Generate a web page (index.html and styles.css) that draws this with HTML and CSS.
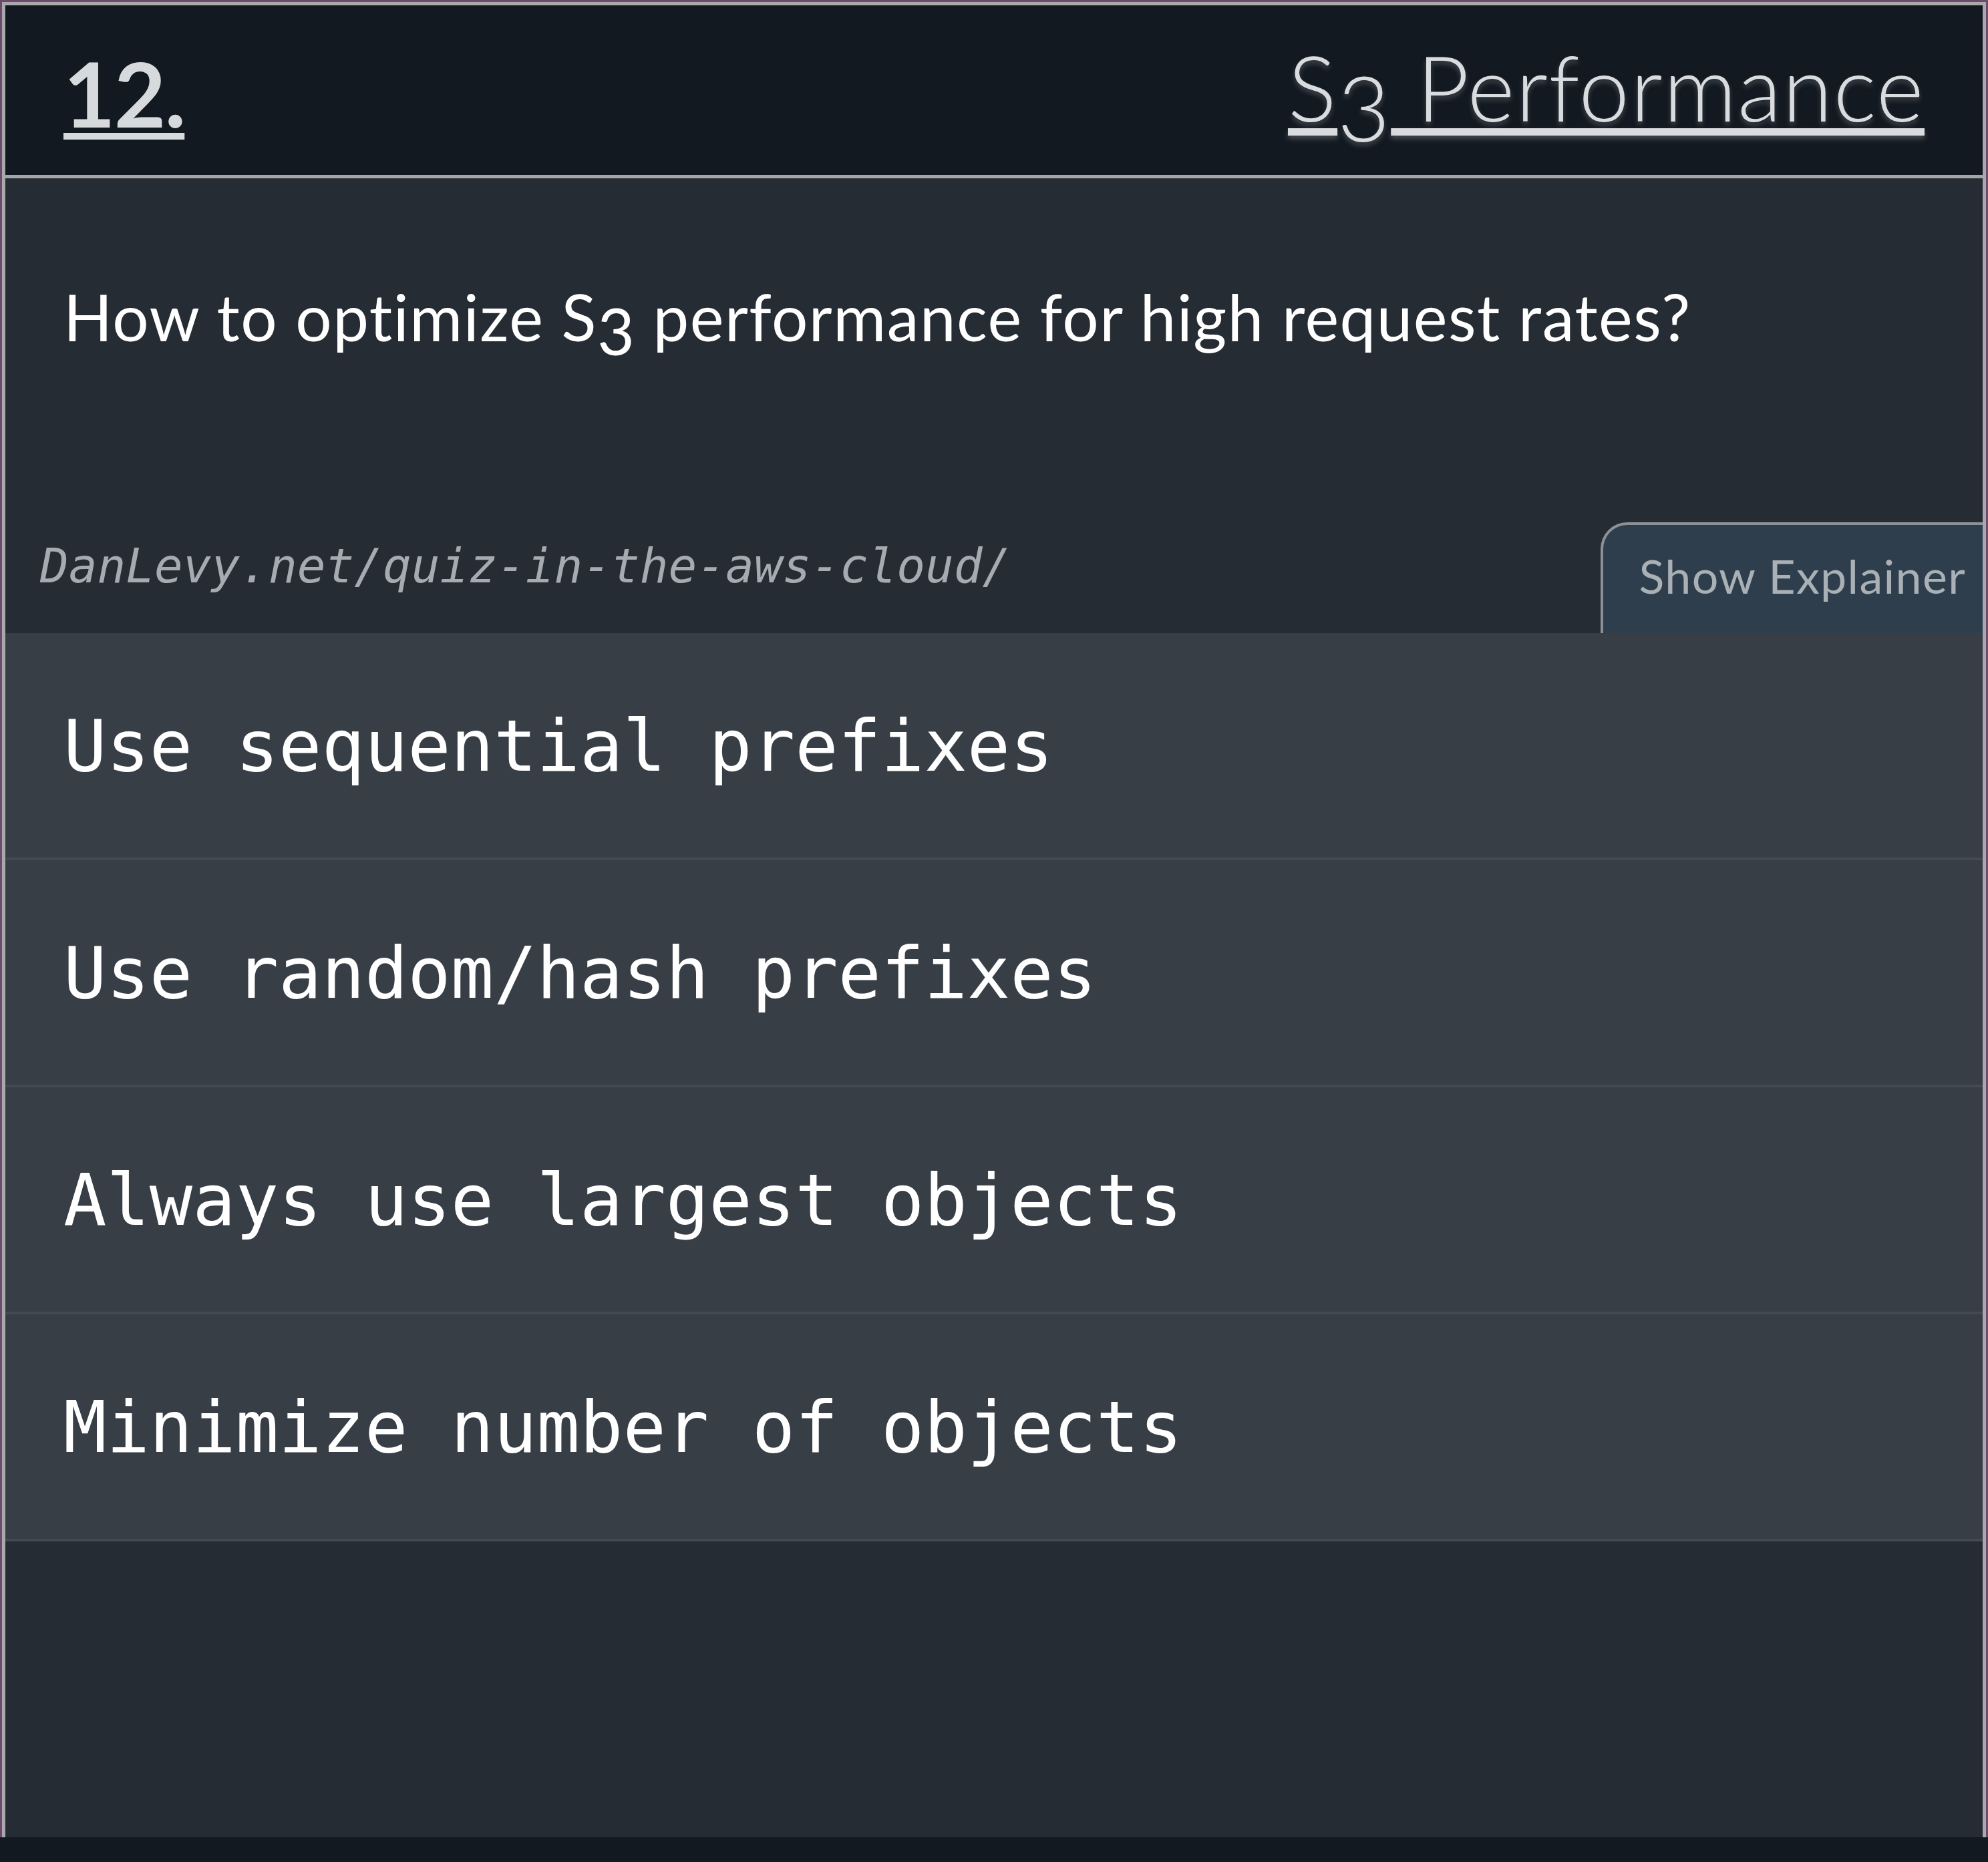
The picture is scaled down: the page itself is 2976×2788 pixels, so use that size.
FILE: index.html
```html
<!DOCTYPE html>
<html lang="en">
<head>
<meta charset="utf-8">
<title>S3 Performance</title>
<link rel="stylesheet" href="styles.css">
</head>
<body>
<div class="frame">
  <div class="card">
    <header class="card-header">
      <a class="qnum" href="#">12.</a>
      <a class="qtitle" href="#">S<span class="onum">3</span> Performance</a>
    </header>
    <section class="question">
      <p class="question-text">How to optimize S<span class="onum">3</span> performance for high request rates?</p>
    </section>
    <div class="meta-row">
      <span class="source">DanLevy.net/quiz-in-the-aws-cloud/</span>
      <button class="explainer-btn" type="button">Show Explainer</button>
    </div>
    <ul class="answers">
      <li class="answer">Use sequential prefixes</li>
      <li class="answer">Use random/hash prefixes</li>
      <li class="answer">Always use largest objects</li>
      <li class="answer">Minimize number of objects</li>
    </ul>
  </div>
</div>
</body>
</html>
```

FILE: styles.css
```css
html, body {
  margin: 0;
  padding: 0;
}

body {
  background: #121920;
  width: 2976px;
  height: 2788px;
  overflow: hidden;
}

.frame {
  border: 3px solid #6f4a6b;
  border-bottom: none;
}

.card {
  border: 5px solid #a7a9ad;
  border-bottom: none;
  background: #262c33;
  padding-bottom: 443px;
}

.card-header {
  box-sizing: border-box;
  height: 259px;
  background: #121920;
  border-bottom: 5px solid #a3a6a9;
  display: flex;
  justify-content: space-between;
  align-items: flex-start;
  padding: 40px 87px 0 87px;
}

.qnum {
  margin-top: 12px;
  font-family: "Lato", "Liberation Sans", sans-serif;
  font-weight: 700;
  font-size: 134px;
  line-height: 1.2;
  color: #d6dadd;
  letter-spacing: -2px;
  text-decoration: underline;
  text-decoration-thickness: 10px;
  text-underline-offset: 8px;
}

.qtitle {
  font-family: "Lato", "Liberation Sans", sans-serif;
  font-weight: 300;
  font-size: 136px;
  line-height: 1.2;
  letter-spacing: 1.4px;
  color: #d9dcdf;
  text-decoration: underline;
  text-decoration-thickness: 11px;
  text-underline-offset: 10px;
  text-shadow: 0 5px 7px rgba(110, 112, 116, 0.55);
}

.onum {
  position: relative;
  top: 0.22em;
}

.question {
  padding: 149px 87px 251px 87px;
}

.question-text {
  margin: 0;
  font-family: "Lato", "Liberation Sans", sans-serif;
  font-weight: 400;
  font-size: 96px;
  line-height: 1.2;
  letter-spacing: 1.5px;
  font-variant-ligatures: none;
  color: #ffffff;
}

.meta-row {
  display: flex;
  justify-content: space-between;
  align-items: flex-start;
  padding-left: 52px;
}

.source {
  margin-top: 24px;
  font-family: "DejaVu Sans Mono", monospace;
  font-style: italic;
  font-size: 71px;
  line-height: 83px;
  color: #a6abb1;
}

.explainer-btn {
  margin: 0;
  font-family: "Lato", "Liberation Sans", sans-serif;
  font-weight: 400;
  font-size: 70px;
  line-height: 84px;
  letter-spacing: 1.3px;
  font-variant-ligatures: none;
  color: #a9b0b6;
  background: #2f3e4c;
  border: 4px solid #8b9196;
  border-right: none;
  border-bottom: none;
  border-top-left-radius: 40px;
  padding: 34px 25px 44px 54px;
  cursor: pointer;
}

.answers {
  list-style: none;
  margin: 0;
  padding: 0;
}

.answer {
  background: #373e46;
  border-bottom: 4px solid #434a51;
  padding: 107px 87px 104px 87px;
  font-family: "DejaVu Sans Mono", monospace;
  font-size: 107px;
  line-height: 125px;
  color: #ffffff;
}
```
